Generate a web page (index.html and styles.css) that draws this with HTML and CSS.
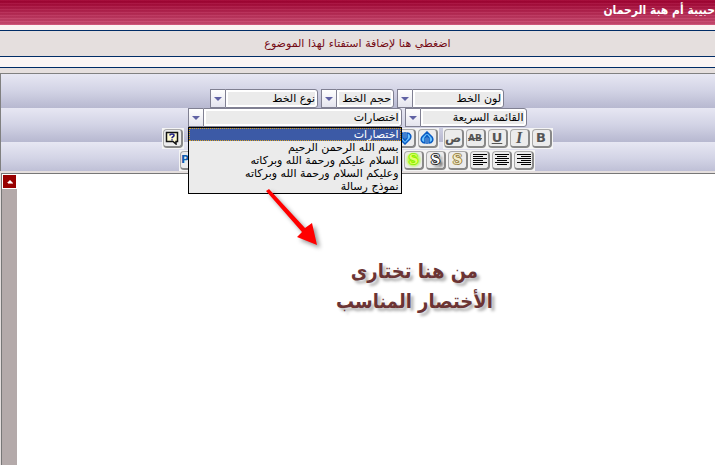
FILE: index.html
```html
<!DOCTYPE html>
<html lang="ar" dir="rtl">
<head>
    <meta charset="UTF-8">
    <meta name="viewport" content="width=device-width, initial-scale=1.0">
    <title>حبيبة أم هبة الرحمان</title>
    <link rel="stylesheet" href="styles.css">
</head>
<body>
    <header class="header">
        <h1>حبيبة أم هبة الرحمان</h1>
    </header>

    <div class="notice">
        <a href="#editor">اضغطي هنا لإضافة استفتاء لهذا الموضوع</a>
    </div>

    <main class="composer">
        <div class="toolbar">
            <div class="row">
                <div class="combo color">
                    <select aria-label="لون الخط"><option>لون الخط</option></select>
                    <span class="arrow"></span>
                </div>
                <div class="combo size">
                    <select aria-label="حجم الخط"><option>حجم الخط</option></select>
                    <span class="arrow"></span>
                </div>
                <div class="combo font">
                    <select aria-label="نوع الخط"><option>نوع الخط</option></select>
                    <span class="arrow"></span>
                </div>
            </div>

            <div class="row">
                <div class="combo quick">
                    <select aria-label="القائمة السريعة"><option>القائمة السريعة</option></select>
                    <span class="arrow"></span>
                </div>
                <div class="combo shortcuts">
                    <select aria-label="اختصارات"><option>اختصارات</option></select>
                    <span class="arrow"></span>
                    <!-- open list -->
                    <ul class="menu" role="listbox" aria-label="اختصارات">
                        <li class="selected" role="option" aria-selected="true">اختصارات</li>
                        <li role="option">بسم الله الرحمن الرحيم</li>
                        <li role="option">السلام عليكم ورحمة الله وبركاته</li>
                        <li role="option">وعليكم السلام ورحمة الله وبركاته</li>
                        <li role="option">نموذج رسالة</li>
                    </ul>
                </div>
            </div>

            <div class="icons">
                <button type="button" class="tool"><span><b>B</b></span></button>
                <button type="button" class="tool"><span><i>I</i></span></button>
                <button type="button" class="tool"><span><u>U</u></span></button>
                <button type="button" class="tool strike"><span><s>AB</s></span></button>
                <button type="button" class="tool letter"><span>ص</span></button>
                <span class="gap"></span>
                <button type="button" class="tool" aria-label="يمين">
                    <span><svg width="14" height="14" viewBox="0 0 14 14"><path d="M7 1L12 6C14 9 12 12 9 12V7L7 4.5L5 7V12C2 12 0 9 2 6Z" fill="#6cc4ff" stroke="#0a5cc4" stroke-width="1.5"/><path d="M7 5V13" stroke="#0a5cc4" stroke-width="1.5"/></svg></span>
                </button>
                <button type="button" class="tool" aria-label="يسار">
                    <span><svg width="14" height="14" viewBox="0 0 14 14"><path d="M7 13L12 8C14 5 12 2 9 2V7L7 9.5L5 7V2C2 2 0 5 2 8Z" fill="#6cc4ff" stroke="#0a5cc4" stroke-width="1.5"/><path d="M7 9V1" stroke="#0a5cc4" stroke-width="1.5"/></svg></span>
                </button>
                <span class="gap wide"></span>
                <button type="button" class="tool" aria-label="مساعدة">
                    <span><svg width="14" height="14" viewBox="0 0 14 14"><path d="M1.5 1.5H12.5V10.5H11V13L8 10.5H1.5Z" fill="#fffbd0" stroke="#111" stroke-width="1.5"/><path d="M5 4.5C5 2.5 9 2.5 9 4.5C9 6 7 5.5 7 7.2M7 8.2V9.6" fill="none" stroke="#24248c" stroke-width="1.6"/></svg></span>
                </button>
            </div>

            <div class="icons">
                <button type="button" class="tool" aria-label="محاذاة لليمين">
                    <span><svg width="14" height="14" viewBox="0 0 14 14"><path d="M0 1.5H14M4 3.5H14M0 5.5H14M4 7.5H14M0 9.5H14M4 11.5H14" stroke="#000"/></svg></span>
                </button>
                <button type="button" class="tool" aria-label="توسيط">
                    <span><svg width="14" height="14" viewBox="0 0 14 14"><path d="M0 1.5H14M2 3.5H12M0 5.5H14M2 7.5H12M0 9.5H14M2 11.5H12" stroke="#000"/></svg></span>
                </button>
                <button type="button" class="tool" aria-label="محاذاة لليسار">
                    <span><svg width="14" height="14" viewBox="0 0 14 14"><path d="M0 1.5H14M0 3.5H10M0 5.5H14M0 7.5H10M0 9.5H14M0 11.5H10" stroke="#000"/></svg></span>
                </button>
                <button type="button" class="tool effect gold"><span>S</span></button>
                <button type="button" class="tool effect shadow"><span>S</span></button>
                <button type="button" class="tool effect glow"><span>S</span></button>
                <span class="gap wider"></span>
                <button type="button" class="tool php"><span>P</span></button>
            </div>
        </div>

        <div class="editor">
            <textarea id="editor" aria-label="نص الموضوع"></textarea>
            <div class="scrollbar">
                <button type="button" class="scroll-up" aria-label="أعلى">
                    <svg width="6" height="4" viewBox="0 0 6 4"><path d="M3 0L6 3H0Z" fill="#fff"/><path d="M1 3.5H6" stroke="#e09090"/></svg>
                </button>
            </div>
        </div>
    </main>

    <div class="hint">
        <svg class="pointer" width="64" height="68" viewBox="0 0 64 68">
            <path d="M3 5L6 3L42 42L49 37L54 59L34 51L39 46Z" fill="#ff0000"/>
        </svg>
        <p>من هنا تختارى<br>الأختصار المناسب</p>
    </div>
</body>
</html>
```

FILE: styles.css
```css
* {
    box-sizing: border-box;
}

body {
    margin: 0;
    min-height: 100vh;
    display: flex;
    flex-direction: column;
    background-color: #fbf5f4;
    font-family: "DejaVu Sans", Tahoma, sans-serif;
    font-size: 11px;
    overflow: hidden;
}

.header {
    height: 25px;
    background: repeating-linear-gradient(rgba(255, 255, 255, 0.05) 0 1px, rgba(70, 0, 20, 0.07) 1px 3px),
        linear-gradient(#a00030, #cc5075);
}

.header h1 {
    margin: 0;
    font-family: "DejaVu Sans Condensed", "DejaVu Sans", sans-serif;
    font-size: 12px;
    line-height: 21px;
    color: white;
}

.notice {
    margin: 5px 0 10px;
    height: 27px;
    border-top: 1px solid #002c66;
    border-bottom: 1px solid #002c66;
    background-color: #e5dfde;
    text-align: center;
    line-height: 26px;
}

.notice a {
    color: #740a14;
    text-decoration: none;
}

.composer {
    flex: 1;
    display: flex;
    flex-direction: column;
    border-top: 1px solid #002c66;
    padding-top: 5px;
    background-color: #e5dfde;
}

/* Barra de herramientas */
.toolbar {
    border-top: 1px solid #808080;
    border-left: 1px solid #808080;
    padding: 15px 2px 0 0;
    background: repeating-linear-gradient(#e7e7f3 0, #d2d3e5 17px, #b7b8d0 34px);
}

.row {
    display: flex;
    justify-content: center;
    gap: 3px;
}

.combo {
    position: relative;
    display: flex;
    height: 19px;
}

.combo select {
    flex: 1;
    min-width: 0;
    appearance: none;
    border: 1px solid #808092;
    border-radius: 0 3px 3px 0;
    padding: 0 2px;
    background-color: #ebebeb;
    box-shadow: inset 0 0 0 2px white;
    color: black;
    font-family: inherit;
    font-size: 11px;
}

.arrow {
    width: 15px;
    border: 1px solid #808092;
    border-right: none;
    background: linear-gradient(#fff, #e4e4ee);
    display: flex;
    align-items: center;
    justify-content: center;
}

.arrow::before {
    content: "";
    border: 4px solid transparent;
    border-top-color: #6062a4;
    border-bottom: none;
}

.color {
    width: 107px;
}

.size {
    width: 73px;
}

.font {
    width: 108px;
}

.quick {
    width: 122px;
}

.shortcuts {
    width: 214px;
}

.menu {
    position: absolute;
    top: 100%;
    left: 0;
    right: 0;
    z-index: 2;
    margin: 0;
    padding: 0;
    list-style: none;
    border: 1px solid black;
    background-color: #ebebeb;
}

.menu li {
    height: 13px;
    line-height: 14px;
    padding: 0 2px;
    white-space: nowrap;
}

.menu .selected {
    background-color: #3c5aa6;
    color: white;
    outline: 1px dotted #d8a020;
    outline-offset: -1px;
}

/* Botones */
.icons {
    display: flex;
    justify-content: center;
    margin-top: 1px;
}

.tool {
    width: 22px;
    height: 21px;
    padding: 1px;
    border: none;
    background-color: #f4f4f4;
    color: #555;
    font-family: inherit;
    font-size: 13px;
    font-weight: bold;
}

.tool span {
    display: flex;
    align-items: center;
    justify-content: center;
    height: 19px;
    border: 1px solid #aaa;
    border-right: 2px solid #888;
    border-bottom: 2px solid #888;
    border-radius: 4px;
    background-color: #ececec;
    overflow: hidden;
    line-height: 16px;
}

.tool svg {
    flex: none;
}

.tool i {
    font-family: "Liberation Serif", serif;
    font-size: 16px;
}

.strike {
    font-size: 9px;
}

.letter {
    font-size: 12px;
}

.effect {
    font-family: "DejaVu Serif", serif;
}

.gold {
    color: #f4ecc8;
    text-shadow: 1px 0 #968040, -1px 0 #968040, 0 1px #968040, 0 -1px #968040;
}

.shadow {
    color: white;
    text-shadow: 1px 0 #222, -1px 0 #222, 0 1px #222, 0 -1px #222, 3px 3px 3px #444;
}

.glow {
    color: #e4ff70;
    text-shadow: 1px 0 #8cf000, -1px 0 #8cf000, 0 1px #8cf000, 0 -1px #8cf000, 0 0 4px #a0ff00;
}

.glow span {
    background: radial-gradient(#b4ff40 30%, #ececec 70%);
}

.php {
    color: #1060b0;
    font-size: 11px;
}

.php span {
    justify-content: flex-end;
}

.gap {
    width: 4px;
}

.gap.wide {
    width: 211px;
}

.gap.wider {
    width: 202px;
}

/* Area de texto */
.editor {
    flex: 1;
    display: flex;
    margin: 2px 0 0 1px;
    border-top: 1px solid #777;
    border-left: 1px solid #777;
    background-color: white;
}

.editor textarea {
    flex: 1;
    border: none;
    outline: none;
    resize: none;
    background-color: white;
    font: inherit;
}

.scrollbar {
    width: 15px;
    background-color: #b4aaaa;
}

.scroll-up {
    display: flex;
    align-items: center;
    justify-content: center;
    width: 15px;
    height: 15px;
    padding: 0;
    border: 1px solid #f0c8c8;
    outline: 1px solid white;
    outline-offset: -1px;
    background-color: #980000;
}

/* Flecha y texto sobre la pagina */
.hint {
    position: absolute;
    top: 186px;
    left: 263px;
    z-index: 3;
    display: flex;
    flex-direction: column;
    direction: ltr;
}

.pointer {
    filter: drop-shadow(3px 3px 2px rgba(0, 0, 0, 0.4));
}

.hint p {
    margin: 2px 0 0 73px;
    direction: rtl;
    text-align: center;
    white-space: nowrap;
    font-family: "DejaVu Sans Condensed", "DejaVu Sans", sans-serif;
    font-size: 20px;
    font-weight: bold;
    line-height: 30px;
    color: #6b3434;
    text-shadow: 3px 3px 3px rgba(0, 0, 0, 0.3);
}
```
